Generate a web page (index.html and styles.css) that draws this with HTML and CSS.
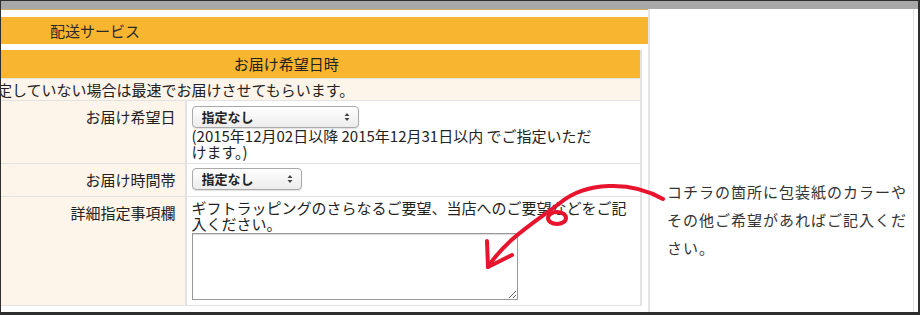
FILE: index.html
```html
<!DOCTYPE html>
<html lang="ja">
<head>
  <meta charset="UTF-8" />
  <title>配送サービス</title>
  <link rel="stylesheet" href="styles.css">
</head>
<body>
  <div class="frame">
    <div class="topbar"></div>
    <div class="cols">
      <main class="main">
        <div class="section-bar">配送サービス</div>
        <table class="form-table">
          <colgroup>
            <col class="col-label">
            <col>
          </colgroup>
          <tr>
            <th colspan="2">お届け希望日時</th>
          </tr>
          <tr>
            <td colspan="2" class="note">日時を指定していない場合は最速でお届けさせてもらいます。</td>
          </tr>
          <tr class="row-date">
            <td class="label">お届け希望日</td>
            <td class="value">
              <span class="pick-wrap">
                <select class="pick pick-wide"><option>指定なし</option></select>
                <svg class="pick-arrows" width="6" height="10" viewBox="0 0 6 10"><path d="M0.5 4 L3 1 L5.5 4 Z M0.5 6 L3 9 L5.5 6 Z" fill="#444"/></svg>
              </span>
              <div class="hint">(2015年12月02日以降 2015年12月31日以内 でご指定いただ<br>けます。)</div>
            </td>
          </tr>
          <tr class="row-time">
            <td class="label">お届け時間帯</td>
            <td class="value">
              <span class="pick-wrap">
                <select class="pick pick-short"><option>指定なし</option></select>
                <svg class="pick-arrows" width="6" height="10" viewBox="0 0 6 10"><path d="M0.5 4 L3 1 L5.5 4 Z M0.5 6 L3 9 L5.5 6 Z" fill="#444"/></svg>
              </span>
            </td>
          </tr>
          <tr class="row-memo">
            <td class="label">詳細指定事項欄</td>
            <td class="value">
              <div class="hint">ギフトラッピングのさらなるご要望、当店へのご要望などをご記入ください。</div>
              <textarea class="memo"></textarea>
            </td>
          </tr>
        </table>
      </main>
      <aside class="side">
        <p>コチラの箇所に包装紙のカラーやその他ご希望があればご記入ください。</p>
      </aside>
    </div>

    <svg class="callout" width="920" height="315" viewBox="0 0 920 315">
      <g fill="none" stroke="#e8142d" stroke-width="4" stroke-linecap="round" stroke-linejoin="round">
        <path d="M663,199 C630,180 585,182 560,203 C535,222 505,240 488,267"/>
        <ellipse cx="557" cy="218" rx="9" ry="6"/>
        <path d="M487,241 L488,267 L512,255"/>
      </g>
    </svg>
  </div>
</body>
</html>
```

FILE: styles.css
```css
* { box-sizing: border-box; }
body {
  margin: 0;
  background: #fff;
  font-family: "Noto Sans CJK JP", "Noto Sans", sans-serif;
  color: #222;
}
.frame {
  position: relative;
  width: 920px;
  height: 315px;
  border-top: 1px solid #2e2e2e;
  border-left: 1px solid #2e2e2e;
  border-right: 2px solid #2e2e2e;
  border-bottom: 3px solid #2e2e2e;
  overflow: hidden;
  display: flex;
  flex-direction: column;
}
.topbar {
  height: 8px;
  background: #a8a8a8;
}
.cols {
  flex: 1;
  display: flex;
}
.main {
  width: 647px;
  border-top: 1px solid #c9b062;
  padding-top: 7px;
  overflow: hidden;
}
.section-bar {
  height: 27px;
  background: #f8b530;
  padding-left: 49px;
  font-size: 15px;
  line-height: 27px;
  color: #2a2a2a;
}
.form-table {
  margin-top: 6px;
  margin-left: -69px;
  width: 710px;
  border-collapse: collapse;
  font-size: 15px;
  line-height: 16px;
}
.col-label { width: 253px; }
.form-table th {
  height: 28px;
  padding: 0;
  background: #f8b530;
  font-weight: normal;
  text-align: center;
  border-right: 2px solid #e2e2e2;
}
.form-table td {
  border: 1px solid #e2e2e2;
  border-right-width: 2px;
  vertical-align: top;
}
.note {
  height: 22px;
  padding: 3px 4px 0;
  background: #fdf4ea;
}
.label {
  background: #fdf4ea;
  text-align: right;
  padding: 8px 9px 0 0;
}
.value {
  background: #fff;
  padding: 0 5px;
}
.row-date td { height: 63px; }
.row-date .value { padding-top: 5px; }
.row-time td { height: 33px; }
.row-time .value { padding-top: 4px; }
.row-memo td { height: 109px; }
.row-memo .value { padding-top: 3px; }
.hint { margin: 0; }
.pick-wrap {
  position: relative;
  display: inline-block;
}
.pick {
  appearance: none;
  -webkit-appearance: none;
  height: 22px;
  margin: 0;
  padding: 0 0 0 9px;
  border: 1px solid #a9a9a9;
  border-radius: 4px;
  background: linear-gradient(#ffffff, #ececec);
  font-family: "Noto Sans CJK JP", sans-serif;
  font-size: 13px;
  font-weight: bold;
  color: #222;
  box-shadow: 0 1px 1px rgba(0, 0, 0, 0.12);
}
.pick-wide { width: 167px; }
.pick-short { width: 110px; }
.pick-arrows {
  position: absolute;
  right: 9px;
  top: 6px;
}
.memo {
  display: block;
  width: 326px;
  height: 67px;
  margin-top: 1px;
  border: 1px solid #9a9a9a;
  box-shadow: inset 0 1px 1px rgba(0, 0, 0, 0.15);
  resize: both;
}
.side {
  flex: 1;
  border-left: 2px solid #e6e6e6;
  border-right: 1px solid #e2e2e2;
  margin-right: 4px;
  padding: 169px 0 0 17px;
}
.side p {
  margin: 0;
  width: 245px;
  font-size: 15px;
  letter-spacing: 1px;
  line-height: 28px;
  color: #333;
}
.callout {
  position: absolute;
  top: -1px;
  left: -1px;
  pointer-events: none;
}
```
